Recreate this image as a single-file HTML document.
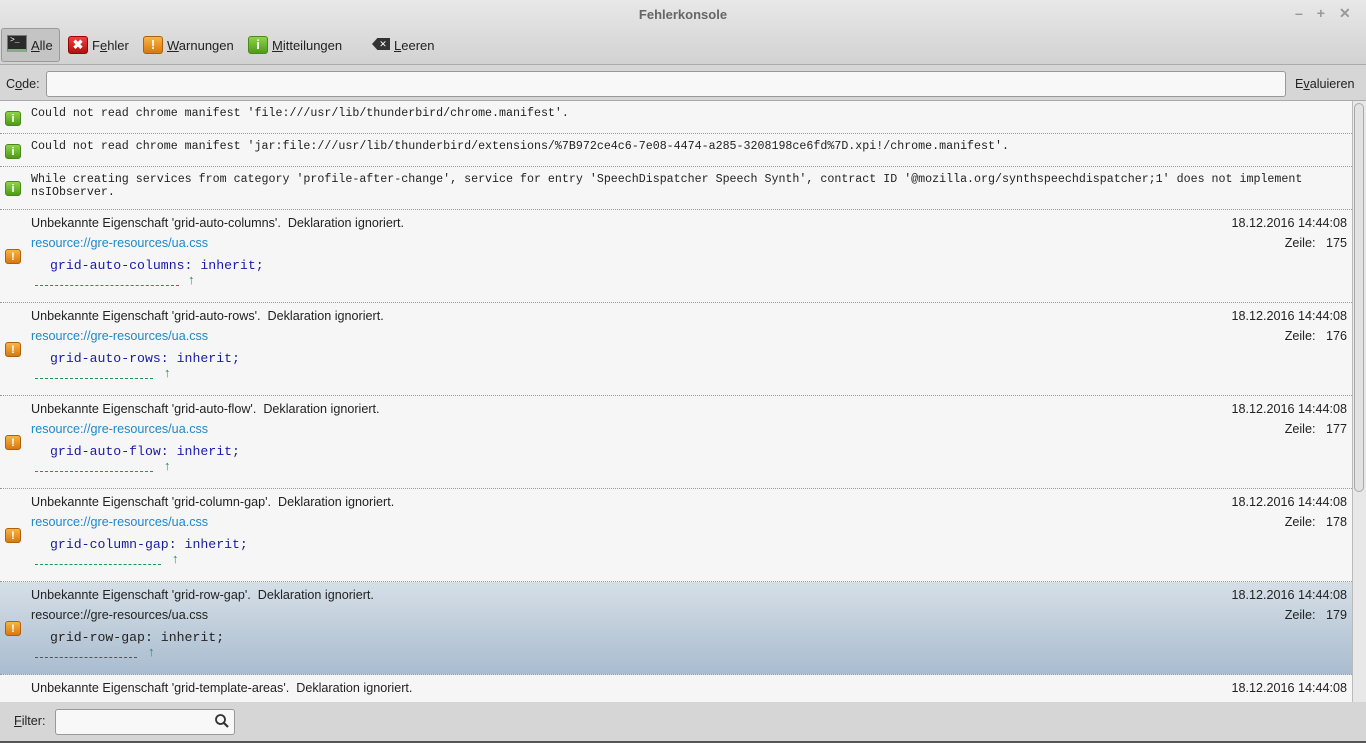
<!DOCTYPE html>
<html><head><meta charset="utf-8"><style>
*{box-sizing:border-box;margin:0;padding:0}
body{width:1366px;height:743px;overflow:hidden;background:#d6d6d6;font-family:"Liberation Sans",sans-serif;font-size:12.6px;color:#222;position:relative}
.a{position:absolute}
.mono{font-family:"Liberation Mono",monospace}
.ic{position:absolute;width:16px;height:15px;border-radius:3px;color:#fff;font-weight:bold;font-size:11px;text-align:center;line-height:14px}
.g{background:linear-gradient(#8fd34a,#4f9a1a);border:1px solid #4a8a1a}
.o{background:linear-gradient(#f7b545,#d9780e);border:1px solid #b0600a}
.row{position:absolute;left:0;width:1352px;border-bottom:1px dotted #999;background:#f6f6f6}
.t{position:absolute;left:31px;font-size:12.6px}
.t.mono{font-size:11.65px}
.u{color:#1e88c8;position:absolute;left:31px}
.code{position:absolute;left:50px;font-family:"Liberation Mono",monospace;font-size:13.2px;color:#1a1aa8}
.dash{position:absolute;left:35px;border-top:1px dashed #1a9a50;height:1px}
.arr{position:absolute;color:#1a9a50;font-size:13px;font-weight:bold}
.r{position:absolute;right:5px;text-align:right}
</style></head><body>
<div class="a" style="left:0;top:0;width:1366px;height:64px;background:linear-gradient(#e8e8e8,#d2d2d2)"></div>
<div class="a" style="left:0;top:7px;width:1366px;text-align:center;font-weight:bold;color:#666;font-size:13px">Fehlerkonsole</div>
<div class="a" style="left:1295px;top:5px;color:#999;font-size:14px;font-weight:bold;letter-spacing:14px">–+✕</div>
<div class="a" style="left:1px;top:28px;width:59px;height:34px;border:1px solid #9a9a9a;border-radius:3px;background:#c4c4c4"></div>
<div class="a mono" style="left:7px;top:35px;width:20px;height:17px;background:#2a2a2a;border:1px solid #777;border-bottom:3px solid #8a8;color:#fff;font-size:8px;line-height:10px;padding-left:2px">&gt;_</div>
<div class="a" style="left:31px;top:38px;font-size:13px"><u>A</u>lle</div>
<div class="ic" style="left:68px;top:36px;width:20px;height:18px;background:linear-gradient(#f04040,#b01010);border:1px solid #900;font-size:13px;line-height:16px">✖</div>
<div class="a" style="left:92px;top:38px;font-size:13px">F<u>e</u>hler</div>
<div class="ic" style="left:143px;top:36px;width:20px;height:18px;background:linear-gradient(#f7b545,#d9780e);border:1px solid #b0600a;font-size:13px;line-height:16px">!</div>
<div class="a" style="left:167px;top:38px;font-size:13px"><u>W</u>arnungen</div>
<div class="ic" style="left:248px;top:36px;width:20px;height:18px;background:linear-gradient(#8fd34a,#4f9a1a);border:1px solid #4a8a1a;font-size:13px;line-height:16px">i</div>
<div class="a" style="left:272px;top:38px;font-size:13px"><u>M</u>itteilungen</div>
<div class="a" style="left:372px;top:38px;width:18px;height:12px;background:#333;clip-path:polygon(30% 0,100% 0,100% 100%,30% 100%,0 50%);color:#fff;font-size:9px;line-height:12px;text-align:center;padding-left:4px">✕</div>
<div class="a" style="left:394px;top:38px;font-size:13px"><u>L</u>eeren</div>
<div class="a" style="left:0;top:64px;width:1366px;height:1px;background:#aaa"></div>
<div class="a" style="left:6px;top:77px">C<u>o</u>de:</div>
<div class="a" style="left:46px;top:71px;width:1240px;height:26px;background:#f8f8f8;border:1px solid #999;border-radius:3px"></div>
<div class="a" style="left:1295px;top:77px">E<u>v</u>aluieren</div>
<div class="a" style="left:0;top:100px;width:1366px;height:602px;background:#f6f6f6;border-top:1px solid #aaa"></div>
<div class="a" style="left:1352px;top:101px;width:14px;height:601px;background:#e8e8e8;border-left:1px solid #bbb"></div>
<div class="a" style="left:1354px;top:103px;width:10px;height:389px;background:#e2e2e2;border:1px solid #aaa;border-radius:5px"></div>

<div class="row" style="top:101px;height:33px"><div class="ic g" style="left:5px;top:10px">i</div><div class="t mono" style="top:6px">Could not read chrome manifest 'file:///usr/lib/thunderbird/chrome.manifest'.</div></div>
<div class="row" style="top:134px;height:33px"><div class="ic g" style="left:5px;top:10px">i</div><div class="t mono" style="top:6px">Could not read chrome manifest 'jar:file:///usr/lib/thunderbird/extensions/%7B972ce4c6-7e08-4474-a285-3208198ce6fd%7D.xpi!/chrome.manifest'.</div></div>
<div class="row" style="top:167px;height:43px"><div class="ic g" style="left:5px;top:14px">i</div><div class="t mono" style="top:6px;line-height:13px">While creating services from category 'profile-after-change', service for entry 'SpeechDispatcher Speech Synth', contract ID '@mozilla.org/synthspeechdispatcher;1' does not implement<br>nsIObserver.</div></div>

<div class="row" style="top:210px;height:93px"><div class="ic o" style="left:5px;top:39px">!</div><div class="t" style="top:6px">Unbekannte Eigenschaft 'grid-auto-columns'.&nbsp; Deklaration ignoriert.</div><div class="u" style="top:26px">resource://gre-resources/ua.css</div><div class="code" style="top:48px">grid-auto-columns: inherit;</div><div class="dash" style="top:75px;width:144px"></div><div class="arr" style="left:188px;top:62px">↑</div><div class="r" style="top:6px">18.12.2016 14:44:08</div><div class="r" style="top:26px">Zeile:&nbsp;&nbsp; 175</div></div>
<div class="row" style="top:303px;height:93px"><div class="ic o" style="left:5px;top:39px">!</div><div class="t" style="top:6px">Unbekannte Eigenschaft 'grid-auto-rows'.&nbsp; Deklaration ignoriert.</div><div class="u" style="top:26px">resource://gre-resources/ua.css</div><div class="code" style="top:48px">grid-auto-rows: inherit;</div><div class="dash" style="top:75px;width:118px"></div><div class="arr" style="left:164px;top:62px">↑</div><div class="r" style="top:6px">18.12.2016 14:44:08</div><div class="r" style="top:26px">Zeile:&nbsp;&nbsp; 176</div></div>
<div class="row" style="top:396px;height:93px"><div class="ic o" style="left:5px;top:39px">!</div><div class="t" style="top:6px">Unbekannte Eigenschaft 'grid-auto-flow'.&nbsp; Deklaration ignoriert.</div><div class="u" style="top:26px">resource://gre-resources/ua.css</div><div class="code" style="top:48px">grid-auto-flow: inherit;</div><div class="dash" style="top:75px;width:118px"></div><div class="arr" style="left:164px;top:62px">↑</div><div class="r" style="top:6px">18.12.2016 14:44:08</div><div class="r" style="top:26px">Zeile:&nbsp;&nbsp; 177</div></div>
<div class="row" style="top:489px;height:93px"><div class="ic o" style="left:5px;top:39px">!</div><div class="t" style="top:6px">Unbekannte Eigenschaft 'grid-column-gap'.&nbsp; Deklaration ignoriert.</div><div class="u" style="top:26px">resource://gre-resources/ua.css</div><div class="code" style="top:48px">grid-column-gap: inherit;</div><div class="dash" style="top:75px;width:126px"></div><div class="arr" style="left:172px;top:62px">↑</div><div class="r" style="top:6px">18.12.2016 14:44:08</div><div class="r" style="top:26px">Zeile:&nbsp;&nbsp; 178</div></div>
<div class="row" style="top:582px;height:93px;background:linear-gradient(#d6dfe7,#a9bccf)"><div class="ic o" style="left:5px;top:39px">!</div><div class="t" style="top:6px">Unbekannte Eigenschaft 'grid-row-gap'.&nbsp; Deklaration ignoriert.</div><div class="t" style="top:26px">resource://gre-resources/ua.css</div><div class="code" style="top:48px;color:#222">grid-row-gap: inherit;</div><div class="dash" style="top:75px;width:102px;border-color:#555"></div><div class="arr" style="left:148px;top:62px">↑</div><div class="r" style="top:6px">18.12.2016 14:44:08</div><div class="r" style="top:26px">Zeile:&nbsp;&nbsp; 179</div></div>
<div class="row" style="top:675px;height:27px;border:none"><div class="t" style="top:6px">Unbekannte Eigenschaft 'grid-template-areas'.&nbsp; Deklaration ignoriert.</div><div class="r" style="top:6px">18.12.2016 14:44:08</div></div>

<div class="a" style="left:0;top:702px;width:1366px;height:39px;background:#d6d6d6"></div>
<div class="a" style="left:14px;top:714px"><u>F</u>ilter:</div>
<div class="a" style="left:55px;top:709px;width:180px;height:26px;background:#f8f8f8;border:1px solid #999;border-radius:3px"></div>
<svg class="a" style="left:214px;top:713px" width="16" height="16"><circle cx="6.5" cy="6.5" r="4.5" fill="none" stroke="#333" stroke-width="1.8"/><line x1="10" y1="10" x2="14" y2="14" stroke="#333" stroke-width="2.2"/></svg>
<div class="a" style="left:0;top:741px;width:1366px;height:2px;background:#555"></div>
</body></html>
